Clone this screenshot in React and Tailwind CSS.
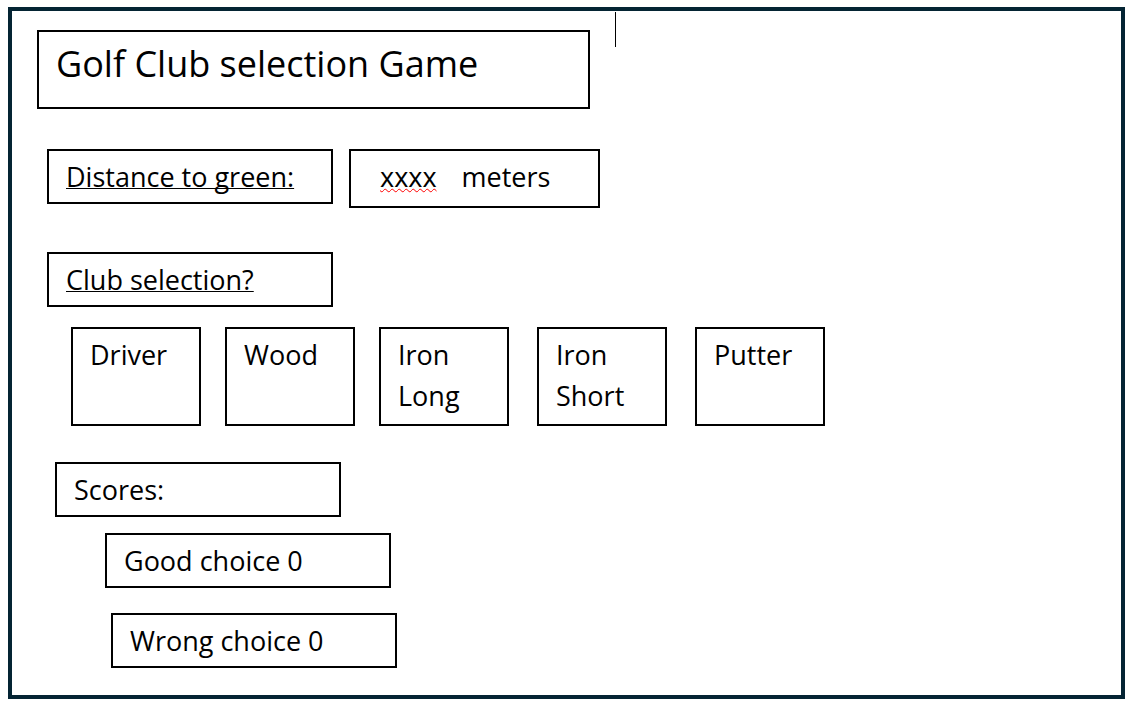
const BOX = "border-2 border-black bg-white px-[17px]";
const LABEL = `${BOX} w-[286px] pt-[5px] pb-[5px]`;

function ClubButton({ children }) {
  return (
    <button
      type="button"
      className="flex h-[99px] w-[130px] items-start border-2 border-black bg-white px-[17px] pt-[5px] text-left"
    >
      {children}
    </button>
  );
}

export default function App() {
  return (
    <div className="min-h-screen bg-white pt-[7px] pr-[6px] pb-[6px] pl-2 font-['Open_Sans',sans-serif] text-[27px] leading-[41px] text-black">
      <main className="border-4 border-[#042433] pb-[27px] pl-[25px]">
        <header className="flex items-start gap-[25px]">
          <h1 className={`${BOX} mt-[19px] h-[79px] w-[553px] pt-[5px] text-[36px] leading-[54px]`}>
            Golf Club selection Game
          </h1>
          <div className="mt-px h-[35px] w-px bg-black" />
        </header>

        <section className="mt-10 ml-[10px] flex items-start gap-4">
          <h2 className={LABEL}>
            <span className="underline decoration-1 underline-offset-1 [text-decoration-skip-ink:none]">
              Distance to green:
            </span>
          </h2>
          <p className={`${BOX} flex h-[59px] w-[251px] gap-[25px] pt-[5px] pl-[29px]`}>
            <span className="underline decoration-[#ff0000] decoration-wavy decoration-1 underline-offset-1 [text-decoration-skip-ink:none]">
              xxxx
            </span>
            <span>meters</span>
          </p>
        </section>

        <section className="mt-11 ml-[10px]">
          <h2 className={LABEL}>
            <span className="underline decoration-1 underline-offset-1 [text-decoration-skip-ink:none]">
              Club selection?
            </span>
          </h2>
          <div className="mt-5 ml-6 flex gap-7">
            <div className="flex gap-6">
              <ClubButton>Driver</ClubButton>
              <ClubButton>Wood</ClubButton>
              <ClubButton>Iron Long</ClubButton>
            </div>
            <ClubButton>Iron Short</ClubButton>
            <ClubButton>Putter</ClubButton>
          </div>
        </section>

        <section className="mt-9 ml-[18px]">
          <h2 className={LABEL}>Scores:</h2>
          <p className={`${LABEL} mt-4 ml-[50px]`}>Good choice 0</p>
          <p className={`${LABEL} mt-[25px] ml-14`}>Wrong choice 0</p>
        </section>
      </main>
    </div>
  );
}
